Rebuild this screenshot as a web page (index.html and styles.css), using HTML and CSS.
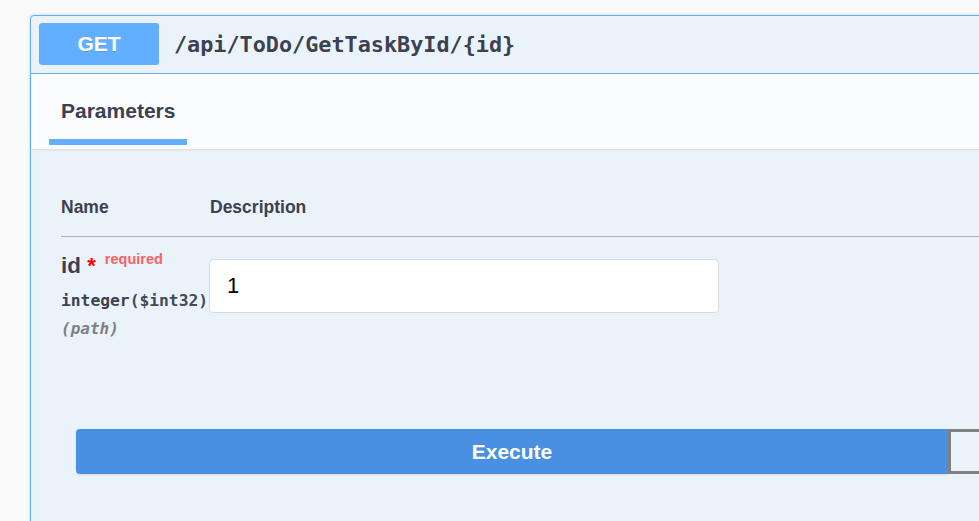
FILE: index.html
```html
<!DOCTYPE html>
<html lang="en">
<head>
<meta charset="utf-8">
<title>GET /api/ToDo/GetTaskById/{id}</title>
<link rel="stylesheet" href="styles.css">
</head>
<body>
<div class="page">
  <div class="opblock">
    <div class="summary">
      <span class="method">GET</span>
      <span class="path">/api/ToDo/GetTaskById/{id}</span>
    </div>
    <div class="section-header">
      <div class="tab">
        <span class="tab-label">Parameters</span>
        <span class="tab-bar"></span>
      </div>
    </div>
    <div class="body">
      <div class="params-head">
        <div class="col-name">Name</div>
        <div class="col-desc">Description</div>
      </div>
      <div class="param-row">
        <div class="col-name">
          <div class="param-name">id<span class="star"> *</span><span class="required">required</span></div>
          <div class="param-type">integer<span class="format">($int32)</span></div>
          <div class="param-in">(path)</div>
        </div>
        <div class="col-desc">
          <input class="param-input" type="text" value="1">
        </div>
      </div>
      <div class="execute-wrapper">
        <button class="btn execute">Execute</button>
        <button class="btn clear"></button>
      </div>
    </div>
  </div>
</div>
</body>
</html>
```
FILE: styles.css
```css
html, body {
  margin: 0;
  padding: 0;
  overflow: hidden;
  background: #fafafa;
  height: 521px;
}

.page {
  padding: 15px 0 0 30px;
  font-family: "Liberation Sans", Arial, sans-serif;
  color: #3b4151;
}

.opblock {
  width: 1900px;
  min-height: 600px;
  border: 1px solid #61affe;
  border-radius: 4px;
  background: #ebf3fa;
  box-shadow: 0 0 3px rgba(0, 0, 0, 0.19);
}

.summary {
  display: flex;
  align-items: center;
  padding: 7px 8px 8px;
  border-bottom: 1px solid #61affe;
}

.method {
  width: 120px;
  height: 42px;
  display: flex;
  align-items: center;
  justify-content: center;
  background: #61affe;
  border-radius: 3px;
  color: #fff;
  font-weight: bold;
  font-size: 21px;
  text-shadow: 0 1px 0 rgba(0, 0, 0, 0.1);
}

.path {
  margin-left: 15px;
  font-family: "DejaVu Sans Mono", monospace;
  font-weight: bold;
  font-size: 21.8px;
  color: #3b4151;
}

.section-header {
  height: 75px;
  box-sizing: border-box;
  padding: 25px 18px 4px;
  background: #fbfcfe;
  box-shadow: 0 1px 2px rgba(0, 0, 0, 0.1);
  position: relative;
}

.tab {
  display: inline-flex;
  flex-direction: column;
}

.tab-label {
  padding: 0 12px;
  font-size: 21px;
  font-weight: bold;
  line-height: 24px;
}

.tab-bar {
  margin-top: 16px;
  height: 6px;
  background: #61affe;
}

.body {
  padding-left: 30px;
}

.params-head {
  display: flex;
  padding-top: 48px;
  padding-bottom: 19px;
  border-bottom: 1px solid #a9b0bd;
  font-size: 17.5px;
  font-weight: bold;
  line-height: 20px;
}

.col-name {
  width: 148px;
  flex: none;
}

.col-desc {
  flex: 1;
}

.params-head .col-desc {
  padding-left: 1px;
}

.param-row {
  display: flex;
  padding-top: 16px;
}

.param-name {
  font-size: 22.4px;
  font-weight: bold;
  line-height: 26px;
  white-space: nowrap;
}

.star {
  color: #ff0000;
}

.required {
  position: relative;
  top: -9px;
  padding-left: 9px;
  font-size: 14.5px;
  color: #f76164;
}

.param-type {
  margin-top: 9.5px;
  font-family: "DejaVu Sans Mono", monospace;
  font-weight: bold;
  font-size: 16.3px;
  line-height: 20px;
  white-space: nowrap;
}

.format {
  color: #454a57;
}

.param-in {
  margin-top: 8px;
  font-family: "DejaVu Sans Mono", monospace;
  font-style: italic;
  font-weight: bold;
  font-size: 16px;
  line-height: 20px;
  color: #808080;
}

.param-input {
  display: block;
  margin-top: 6px;
  width: 510px;
  height: 54px;
  box-sizing: border-box;
  padding: 0 17px;
  border: 1px solid #d9d9d9;
  border-radius: 4px;
  background: #fff;
  font-family: "Liberation Sans", Arial, sans-serif;
  font-size: 22px;
  color: #000;
  outline: none;
}

.execute-wrapper {
  display: flex;
  padding-top: 90.5px;
  padding-left: 15px;
}

.btn {
  width: 872px;
  height: 45px;
  box-sizing: border-box;
  font-family: "Liberation Sans", Arial, sans-serif;
  font-weight: bold;
  font-size: 21px;
}

.execute {
  background: #4990e2;
  color: #fff;
  border: none;
  border-radius: 4px 0 0 4px;
  box-shadow: 0 1px 2px rgba(0, 0, 0, 0.1);
}

.clear {
  background: transparent;
  border: 3px solid #808080;
  border-radius: 0 4px 4px 0;
}
```
